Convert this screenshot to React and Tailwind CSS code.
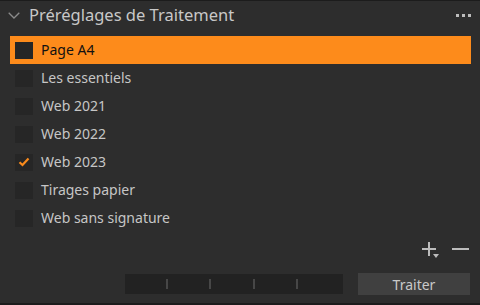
import React from 'react';

const presets = [
    { name: 'Page A4', selected: true },
    { name: 'Les essentiels' },
    { name: 'Web 2021' },
    { name: 'Web 2022' },
    { name: 'Web 2023', checked: true },
    { name: 'Tirages papier' },
    { name: 'Web sans signature' },
];

const PresetRow = ({ name, selected, checked }) => (
    <div
        className={`flex items-center h-[28px] pl-[5px] gap-[8px] ${selected ? 'bg-[#fd8b1b] text-[#111]' : 'text-[#c6c6c6]'}`}
    >
        <div className="w-[18px] h-[17px] bg-[#262626] flex items-center justify-center">
            {checked && (
                <svg width="12" height="10" viewBox="0 0 12 10">
                    <path d="M1.5 5.2 L4.5 8 L10.5 1.5" fill="none" stroke="#f88a1c" strokeWidth="2.2" />
                </svg>
            )}
        </div>
        <span className="text-[14px] leading-none">{name}</span>
    </div>
);

export default function App() {
    return (
        <div
            className="w-[480px] h-[305px] bg-[#2d2d2d] border-t border-[#1c1c1c] border-b-2 border-b-[#1c1c1c] flex flex-col"
            style={{ fontFamily: '"Noto Sans", "Open Sans", sans-serif' }}
        >
            {/* header */}
            <div className="h-[29px] flex items-center pl-[8px] pr-[9px]">
                <svg width="12" height="7" viewBox="0 0 12 7" className="mr-[9px]">
                    <path d="M0.7 0.7 L6 6 L11.3 0.7" fill="none" stroke="#8a8a8a" strokeWidth="1.3" />
                </svg>
                <span className="text-[16.5px] text-[#c8c8c8] leading-none">Préréglages de Traitement</span>
                <div className="ml-auto flex gap-[3px]">
                    <div className="w-[3px] h-[3px] bg-[#bdbdbd]" />
                    <div className="w-[3px] h-[3px] bg-[#bdbdbd]" />
                    <div className="w-[3px] h-[3px] bg-[#bdbdbd]" />
                </div>
            </div>

            {/* list */}
            <div className="mt-[6px] ml-[10px] mr-[9px] flex flex-col">
                {presets.map((p) => (
                    <PresetRow key={p.name} {...p} />
                ))}
            </div>

            {/* add / remove */}
            <div className="mt-[9px] h-[16px] flex items-center justify-end gap-[15px] pr-[11px]">
                <div className="relative w-[16px] h-[16px]">
                    <svg width="16" height="16" viewBox="0 0 16 16">
                        <path d="M8 1 V15 M1 8 H15" stroke="#bcbcbc" strokeWidth="2" />
                    </svg>
                    <svg width="6" height="4" viewBox="0 0 6 4" className="absolute left-[12px] top-[13px]">
                        <path d="M0 0 H6 L3 4 Z" fill="#bcbcbc" />
                    </svg>
                </div>
                <svg width="17" height="16" viewBox="0 0 17 16">
                    <path d="M0 8 H17" stroke="#bcbcbc" strokeWidth="2" />
                </svg>
            </div>

            {/* bottom bar */}
            <div className="mt-[16px] flex items-center pr-[10px]">
                <div className="ml-[125px] w-[218px] h-[20px] bg-[#222222] flex items-center">
                    <div className="ml-[41px] w-[2px] h-[10px] bg-[#474747]" />
                    <div className="ml-[41px] w-[2px] h-[10px] bg-[#474747]" />
                    <div className="ml-[42px] w-[2px] h-[10px] bg-[#474747]" />
                    <div className="ml-[41px] w-[2px] h-[10px] bg-[#474747]" />
                </div>
                <div className="ml-auto w-[112px] h-[22px] bg-[#404040] flex items-center justify-center text-[14px] text-[#c8c8c8]">
                    Traiter
                </div>
            </div>
        </div>
    );
}
